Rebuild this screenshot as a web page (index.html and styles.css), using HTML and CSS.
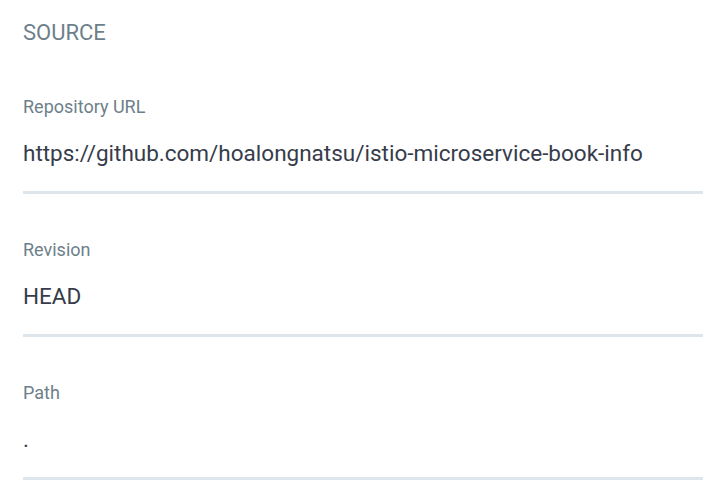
FILE: index.html
```html
<!DOCTYPE html>
<html>
<head>
<meta charset="utf-8">
<link rel="stylesheet" href="styles.css">
</head>
<body>
<div class="panel">
  <h2 class="title">SOURCE</h2>
  <div class="field">
    <div class="label">Repository URL</div>
    <div class="value">https://github.com/hoalongnatsu/istio-microservice-book-info</div>
  </div>
  <div class="field">
    <div class="label">Revision</div>
    <div class="value">HEAD</div>
  </div>
  <div class="field">
    <div class="label">Path</div>
    <div class="value">.</div>
  </div>
</div>
</body>
</html>
```

FILE: styles.css
```css
html, body {
  margin: 0;
  padding: 0;
  background: #ffffff;
}
body {
  font-family: Roboto, "Liberation Sans", sans-serif;
}
.panel {
  padding: 20px 0 0 23px;
}
.title {
  margin: 0;
  font-size: 22px;
  line-height: 26px;
  font-weight: 400;
  color: #6d7f8b;
}
.field {
  padding-top: 45px;
  padding-bottom: 24px;
  border-bottom: 3px solid #dee6eb;
}
.field:first-of-type {
  padding-top: 50px;
}
.label {
  font-size: 18px;
  line-height: 22px;
  color: #6d7f8b;
}
.value {
  margin-top: 21px;
  font-size: 22.5px;
  line-height: 28px;
  color: #363c4a;
  white-space: nowrap;
}
```
